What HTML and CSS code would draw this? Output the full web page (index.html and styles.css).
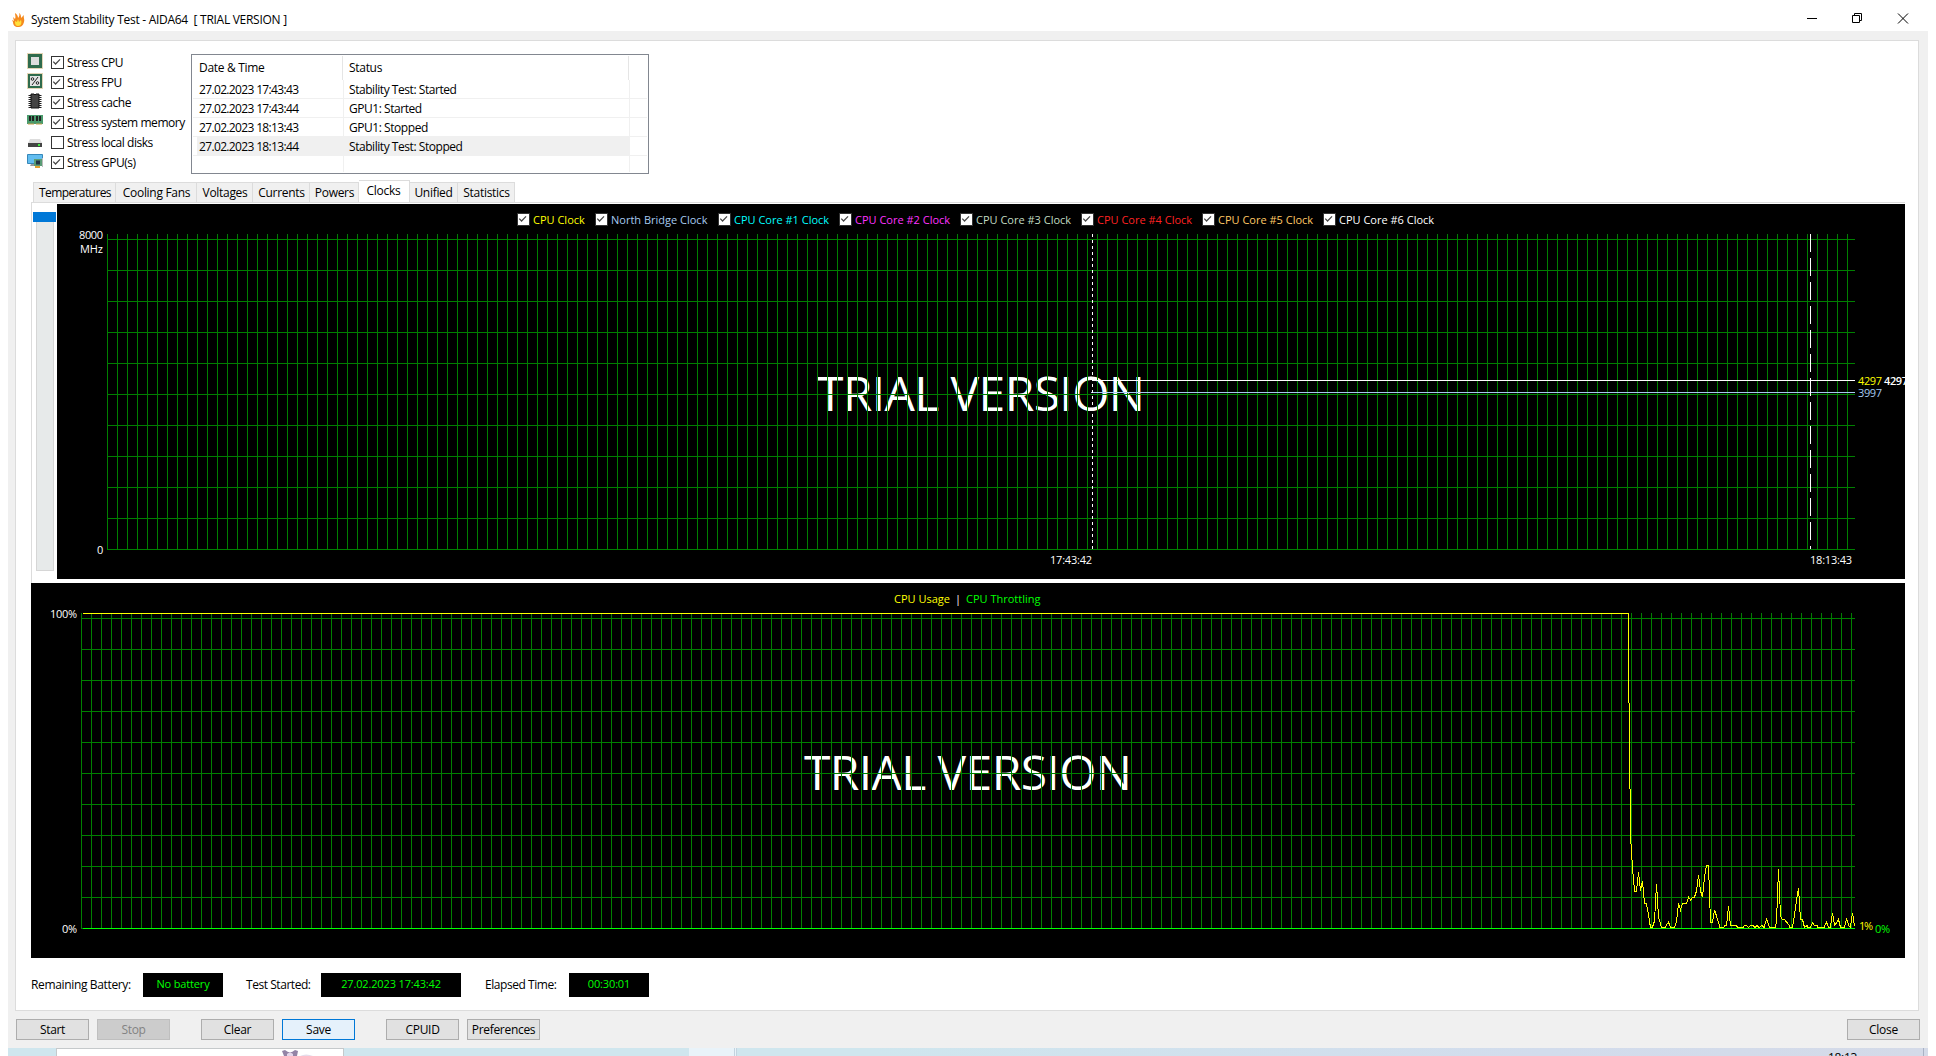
FILE: index.html
```
<!doctype html>
<html lang="en">
  <head>
    <meta charset="utf-8">
    <title>System Stability Test - AIDA64</title>
    <link rel="stylesheet" href="styles.css">
  </head>
  <body>
    <svg class="defs">
      <symbol id="tick" viewBox="0 0 13 13"><path d="M1.5 5.5l2.7 2.8 5.3-5.6" fill="none" stroke="#444" stroke-width="1.4"/></symbol>
      <symbol id="chip" viewBox="0 0 16 16">
        <rect x=".5" y=".5" width="15" height="15" fill="none" stroke="#c5a86a" stroke-dasharray="1 1"/>
        <rect x="1" y="1" width="14" height="14" fill="#2f6b4c"/>
      </symbol>
    </svg>

    <div class="window">
      <header class="titlebar">
        <svg class="flame" width="13" height="15" viewBox="0 0 13 15">
          <path d="M1 5l2 2c1-2 0-4 0-6 2 1 3 3 3 5 1-1 2-3 1-5 2 1 2 3 2 5l3-3c-1 2 1 5 0 7-1 4-3 5-6 5s-5-2-5-5L0 8l2 1z" fill="#f58a1f"/>
          <path d="M3 9l2 1 1-3 1 3 2-2c1 3 0 6-3 6s-3-3-3-5z" fill="#ffe03a"/>
        </svg>
        <span class="title">System Stability Test - AIDA64&nbsp; [ TRIAL VERSION ]</span>
        <svg class="controls" width="102" height="12" viewBox="0 0 102 12" fill="none" stroke="#000">
          <path d="M0 5.5h10"/>
          <path d="M45.5 2.5h7v7h-7zM47.5 2.5v-2h7v7h-2"/>
          <path d="M91 .5l10 10M101 .5l-10 10"/>
        </svg>
      </header>

      <main class="group">
        <section class="setup">
          <ul class="stress">
            <li><svg class="icon"><use href="#chip"/><path d="M4 4h8v8H4z" fill="#ddd"/></svg><svg class="check"><use href="#tick"/></svg><span>Stress CPU</span></li>
            <li><svg class="icon"><use href="#chip"/><path d="M3 3h10v10H3z" fill="#e4e4e4"/><path d="M11 4l-6 8" stroke="#222"/><circle cx="5.5" cy="6" r="1.3" fill="none" stroke="#222"/><circle cx="10.5" cy="10" r="1.3" fill="none" stroke="#222"/></svg><svg class="check"><use href="#tick"/></svg><span>Stress FPU</span></li>
            <li><svg class="icon"><path d="M3 2v13M13 2v13" stroke="#222" stroke-width="3" stroke-dasharray="1 1"/><path d="M4 1h3l1 1 1-1h3v14H4z" fill="#444" stroke="#111"/></svg><svg class="check"><use href="#tick"/></svg><span>Stress cache</span></li>
            <li><svg class="icon"><path d="M0 2h16v9H0z" fill="#4a9a6c"/><path d="M2 3h2v5H2zM5 3h2v5H5zM9 3h2v5H9zM12 3h2v5h-2z" fill="#222"/><path d="M1 11h14" stroke="#c9a04c" stroke-dasharray="6 2"/></svg><svg class="check"><use href="#tick"/></svg><span>Stress system memory</span></li>
            <li><svg class="icon"><path d="M3 6h10l2 4H1z" fill="#ddd"/><path d="M1 10h14v4H1z" fill="#444"/><path d="M11 12h2" stroke="#4e4" stroke-width="2"/></svg><svg class="check"></svg><span>Stress local disks</span></li>
            <li><svg class="icon"><path d="M.5 1.5h15v9H.5z" fill="#62bdf0" stroke="#3687b9"/><path d="M4 11h3v2H3z" fill="#999"/><path d="M7 6h8v7H7z" fill="#5a9c75"/><path d="M9 7.5h4v4H9z" fill="#234"/><path d="M15.5 5v9" stroke="#bbb"/><path d="M8 14h5" stroke="#e0a030" stroke-width="2"/></svg><svg class="check"><use href="#tick"/></svg><span>Stress GPU(s)</span></li>
          </ul>

          <div class="log">
            <div class="log-head"><span>Date &amp; Time</span><span>Status</span></div>
            <div class="log-row"><span>27.02.2023 17:43:43</span><span>Stability Test: Started</span></div>
            <div class="log-row"><span>27.02.2023 17:43:44</span><span>GPU1: Started</span></div>
            <div class="log-row"><span>27.02.2023 18:13:43</span><span>GPU1: Stopped</span></div>
            <div class="log-row selected"><span>27.02.2023 18:13:44</span><span>Stability Test: Stopped</span></div>
            <div class="log-row last"><span></span><span></span></div>
          </div>
        </section>

        <nav class="tabs">
          <span class="tab">Temperatures</span>
          <span class="tab">Cooling Fans</span>
          <span class="tab">Voltages</span>
          <span class="tab">Currents</span>
          <span class="tab">Powers</span>
          <span class="tab active">Clocks</span>
          <span class="tab">Unified</span>
          <span class="tab">Statistics</span>
        </nav>

        <section class="page">
          <div class="slider"><div class="thumb"></div><div class="track"></div></div>
          <div class="panel clocks">
            <div class="legend">
              <span class="yellow"><svg class="check"><use href="#tick"/></svg><b>CPU Clock</b></span>
              <span class="blue"><svg class="check"><use href="#tick"/></svg><b>North Bridge Clock</b></span>
              <span class="cyan"><svg class="check"><use href="#tick"/></svg><b>CPU Core #1 Clock</b></span>
              <span class="magenta"><svg class="check"><use href="#tick"/></svg><b>CPU Core #2 Clock</b></span>
              <span class="sage"><svg class="check"><use href="#tick"/></svg><b>CPU Core #3 Clock</b></span>
              <span class="red"><svg class="check"><use href="#tick"/></svg><b>CPU Core #4 Clock</b></span>
              <span class="orange"><svg class="check"><use href="#tick"/></svg><b>CPU Core #5 Clock</b></span>
              <span class="white"><svg class="check"><use href="#tick"/></svg><b>CPU Core #6 Clock</b></span>
            </div>
            <svg class="chart" width="1848" height="345" viewBox="57 234 1848 345">
              <defs>
                <pattern id="cols1" x="107" y="0" width="10" height="10" patternUnits="userSpaceOnUse"><rect width="1" height="10" fill="#008000"/></pattern>
                <pattern id="rows1" x="0" y="239" width="10" height="31" patternUnits="userSpaceOnUse"><rect width="10" height="1" fill="#008000"/></pattern>
              </defs>
              <text class="mark" x="817" y="411" textLength="328">TRIAL VERSION</text>
              <rect x="107" y="234" width="1741" height="316" fill="url(#cols1)"/>
              <rect x="107" y="239" width="1748" height="311" fill="url(#rows1)"/>
              <path class="line white-line" d="M1092 380.5H1855"/>
              <path class="line blue-line" d="M1091 392.5H1855"/>
              <path class="line white-line" d="M1092.5 234V549" stroke-dasharray="3 3"/>
              <path class="line white-line" d="M1810.5 234V549" stroke-dasharray="18 6"/>
              <text x="79" y="239" textLength="24">8000</text>
              <text x="80" y="253" textLength="23">MHz</text>
              <text x="97" y="554" textLength="6">0</text>
              <text x="1050" y="564" textLength="42">17:43:42</text>
              <text x="1810" y="564" textLength="42">18:13:43</text>
              <text class="t-yellow" x="1858" y="385" textLength="24">4297</text>
              <text class="t-bold" x="1884" y="385" textLength="24">4297</text>
              <text class="t-blue" x="1858" y="397" textLength="24">3997</text>
            </svg>
          </div>
        </section>

        <section class="panel usage">
          <div class="usage-legend"><b class="yellow">CPU Usage</b><b class="white">|</b><b class="green">CPU Throttling</b></div>
          <svg class="chart" width="1874" height="345" viewBox="31 613 1874 345">
            <defs>
              <pattern id="cols2" x="81" y="0" width="10" height="10" patternUnits="userSpaceOnUse"><rect width="1" height="10" fill="#008000"/></pattern>
              <pattern id="rows2" x="0" y="618" width="10" height="31" patternUnits="userSpaceOnUse"><rect width="10" height="1" fill="#008000"/></pattern>
            </defs>
            <text class="mark" x="804" y="790" textLength="328">TRIAL VERSION</text>
            <rect x="81" y="613" width="1771" height="316" fill="url(#cols2)"/>
            <rect x="81" y="618" width="1774" height="311" fill="url(#rows2)"/>
            <polyline class="line yellow-line" points="83,613.5 1628.5,613.5 1628.5,665 1629.5,740 1630.5,836 1631.5,852 1632.5,868 1634.5,891 1636.5,891 1638.5,872 1640.5,891 1642.5,881 1644.5,903 1646.5,904 1648.5,915 1650.5,927.5 1652.5,927 1654.5,921 1656.5,884 1658.5,917 1661.5,927.5 1665,927.5 1668.5,922 1670.5,927.5 1674.5,927.5 1676.5,922 1678.5,903 1680.5,910 1682.5,903.5 1686.5,903.5 1688.5,897 1690.5,900 1692.5,897.5 1694.5,897 1696.5,891 1698.5,875 1700.5,891 1702.5,897 1704.5,877 1706.5,865.5 1708.5,865.5 1710.5,922.5 1712.5,922.5 1714.5,910 1716.5,916 1720,927.5 1724,927.5 1724.5,925.5 1726.5,925.5 1728.5,906 1730.5,925.5 1736.5,925.5 1737.5,927.5 1743,927.5 1744.5,925.5 1746.5,925.5 1748.5,927.5 1750.5,925.5 1753,925.5 1755,927.5 1757,925.5 1759,927.5 1762,925.5 1764,927.5 1766.5,919 1769.5,927.5 1775,927.5 1776.5,922 1778.5,869 1780.5,916 1782.5,919.5 1784.5,919.5 1789,925 1790,927.5 1792.5,927.5 1794.5,915 1796.5,900 1798.5,888 1800.5,919.5 1802.5,919.5 1804.5,927.5 1807,925.5 1808,927.5 1810.5,927.5 1812.5,922.5 1814.5,925.5 1817,925.5 1818,927.5 1824,927.5 1826.5,922 1828.5,927.5 1830.5,927 1832.5,913 1834.5,925 1836.5,923 1838.5,919.5 1840.5,927.5 1844.5,927.5 1846.5,919 1849,926 1850.5,927 1852.5,913 1854.5,926"/>
            <path class="line green-line" d="M83 928.5H1855"/>
            <text x="50" y="618" textLength="27">100%</text>
            <text x="62" y="933" textLength="15">0%</text>
            <text class="t-yellow" x="1859" y="930" textLength="14">1%</text>
            <text class="t-green" x="1875" y="933" textLength="15">0%</text>
          </svg>
        </section>

        <section class="status">
          <span class="label battery">Remaining Battery:</span><span class="value">No battery</span>
          <span class="label started">Test Started:</span><span class="value wide">27.02.2023 17:43:42</span>
          <span class="label elapsed">Elapsed Time:</span><span class="value">00:30:01</span>
        </section>
      </main>

      <footer class="buttons">
        <button>Start</button>
        <button disabled>Stop</button>
        <button class="gap">Clear</button>
        <button class="focus">Save</button>
        <button class="gap">CPUID</button>
        <button>Preferences</button>
        <button class="close">Close</button>
      </footer>

      <div class="taskbar">
        <div class="search">
          <svg width="34" height="6" viewBox="0 0 34 6"><path d="M0 1l3-1 3 2h4l3-2 3 1-1 5H2z" fill="#9384a6"/><path d="M5 4l3-2 3 2v2H5z" fill="#e3d6ea"/><path d="M18 6q6-3 13 0z" fill="#e5dcea"/></svg>
        </div>
        <div class="app"></div>
        <div class="tray"><span>18:13</span></div>
      </div>
    </div>
  </body>
</html>
```

FILE: styles.css
```
* { box-sizing: border-box; }
body { margin: 0; background: #fff; color: #000; font: 12px/16px "Open Sans", "Noto Sans", sans-serif; letter-spacing: -0.3px; }
svg { display: block; flex: none; }
b { font-weight: normal; }
.defs { display: none; }
.window { width: 1920px; height: 1056px; margin-left: 8px; display: flex; flex-direction: column; background: #f0f0f0; overflow: hidden; white-space: nowrap; }

.titlebar { height: 31px; flex: none; display: flex; background: #fff; padding: 12px 19px 0 4px; }
.flame { margin-right: 6px; }
.title { line-height: 15px; letter-spacing: -0.28px; }
.controls { margin-left: auto; margin-top: 1px; }

.group { height: 971px; flex: none; margin: 9px 9px 0 7px; border: 1px solid #dcdcdc; background: #fff; display: flex; flex-direction: column; }
.setup { height: 139px; flex: none; display: flex; }
.stress { list-style: none; margin: 0; padding: 12px 0 0 11px; width: 175px; letter-spacing: -0.45px; }
.stress li { height: 20px; display: flex; }
.icon { width: 16px; height: 16px; margin-right: 8px; }
.check { width: 13px; height: 13px; margin: 3px 3px 0 0; background: #fff; border: 1px solid #333; }
.stress span { line-height: 19px; }

.log { width: 458px; height: 120px; margin-top: 13px; border: 1px solid #828790; padding: 1px 1px 0; }
.log-head { display: flex; height: 24px; line-height: 24px; padding-left: 6px; }
.log-head span:first-child { width: 144px; border-right: 1px solid #e5e5e5; }
.log-head span:last-child { width: 286px; padding-left: 6px; border-right: 1px solid #e5e5e5; }
.log-row { display: flex; height: 19px; line-height: 20px; border-bottom: 1px solid #f0f0f0; letter-spacing: -0.45px; }
.log-row span:first-child { width: 147px; padding-left: 2px; margin-left: 4px; border-right: 1px solid #f0f0f0; letter-spacing: -0.65px; }
.log-row span:last-child { width: 286px; padding-left: 5px; border-right: 1px solid #f0f0f0; }
.log-row.selected span { background: #f0f0f0; }
.log-row.last { height: 16px; border: 0; }

.tabs { height: 23px; flex: none; display: flex; align-items: flex-end; padding-left: 17px; }
.tab { height: 21px; line-height: 20px; width: 49px; padding-left: 1px; text-align: center; background: #f0f0f0; border: 1px solid #dcdcdc; border-width: 1px 1px 0 0; }
.tab:nth-child(1) { width: 83px; border-left-width: 1px; letter-spacing: -0.6px; }
.tab:nth-child(2) { width: 81px; }
.tab:nth-child(3) { width: 56px; }
.tab:nth-child(4) { width: 57px; }
.tab:nth-child(7) { width: 48px; padding-left: 0; }
.tab:nth-child(8) { width: 57px; }
.tab.active { height: 23px; width: 51px; padding: 0 1px 0 0; background: #fff; }

.page { height: 381px; flex: none; margin: -1px 13px 0 15px; padding-top: 1px; border: 1px solid #dcdcdc; border-width: 1px 0 0 1px; display: flex; }
.slider { width: 25px; padding: 8px 2px 0 1px; }
.thumb { height: 10px; background: #0078d7; margin-right: -1px; }
.track { width: 18px; height: 349px; margin-left: 3px; background: #e7eaea; border: 1px solid #d6d6d6; border-top: 0; }

.panel { background: #000; overflow: hidden; flex: none; }
.clocks { width: 1848px; height: 375px; }
.chart { overflow: visible; }
.chart text { fill: #fff; font-size: 11px; letter-spacing: 0; }
.chart .mark { font-size: 48px; }
.chart .t-yellow { fill: #ff0; }
.chart .t-blue { fill: #a6caf0; }
.chart .t-green { fill: #0f0; }
.chart .t-bold { font-weight: 600; }
.line { fill: none; stroke-width: 1; shape-rendering: crispEdges; }
.white-line { stroke: #fff; }
.blue-line { stroke: #a6caf0; }
.yellow-line { stroke: #ff0; }
.green-line { stroke: #0f0; }

.legend { height: 30px; padding-left: 460px; display: grid; grid-template-columns: 78px 123px repeat(6, 121px); font-size: 11px; letter-spacing: 0; }
.legend b, .usage-legend b { font-weight: 500; }
.legend span { display: flex; align-items: center; padding-top: 1px; }
.legend .check { margin: 0 3px 0 0; }
.yellow { color: #ff0; }
.blue { color: #a6caf0; }
.cyan { color: #0ff; }
.magenta { color: #f3f; }
.sage { color: #c0dcc0; }
.red { color: #f22; }
.orange { color: #ffc864; }
.white { color: #fff; }
.green { color: #0f0; }

.usage { height: 375px; width: 1874px; margin-left: 15px; }
.usage-legend { height: 30px; line-height: 31px; padding-left: 863px; display: flex; gap: 5px; font-size: 11px; letter-spacing: 0; }

.status { display: flex; padding: 15px 0 0 15px; line-height: 24px; letter-spacing: -0.35px; }
.battery { width: 112px; }
.started { width: 75px; margin-left: 23px; letter-spacing: -0.45px; }
.elapsed { width: 84px; margin-left: 24px; letter-spacing: -0.45px; }
.value { width: 80px; height: 24px; line-height: 22px; background: #000; color: #0f0; text-align: center; font-size: 11px; letter-spacing: -0.15px; }
.value.wide { width: 140px; }

.buttons { height: 37px; flex: none; display: flex; gap: 8px; padding: 8px 8px 0; }
button { width: 73px; height: 21px; padding: 0; font: inherit; letter-spacing: inherit; line-height: 18px; color: #000; background: #e1e1e1; border: 1px solid #adadad; }
button:disabled { color: #838383; background: #ccc; border-color: #bfbfbf; }
button.gap { margin-left: 23px; }
button.focus { background: #e5f1fb; border-color: #0078d7; }
button.close { margin-left: auto; }

.taskbar { height: 8px; flex: none; display: flex; padding-left: 48px; background: linear-gradient(90deg, #cfe6ee 0 45%, #d2dcec 80%, #d4dae8); overflow: hidden; }
.search { width: 288px; background: #fff; border: 1px solid #c5c9cb; border-bottom: 0; padding: 1px 0 0 225px; }
.app { width: 48px; margin-left: 345px; background: #e9f3f9; border-right: 3px double #c2d3df; }
.tray { margin-left: auto; width: 96px; border-right: 1px solid #a9b2c4; margin-right: 4px; }
.tray span { display: block; line-height: 16px; margin-top: 2px; }
```
